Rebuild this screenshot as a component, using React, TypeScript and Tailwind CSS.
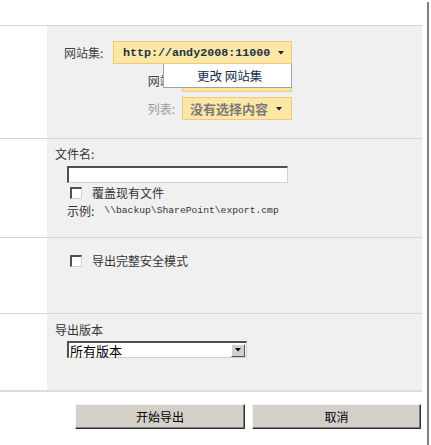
import React from "react";

const cjk = "font-['Noto_Sans_CJK_SC',_'Noto_Sans',_sans-serif]";

const Caret: React.FC<{ color?: string }> = ({ color = "#222" }) => (
  <svg width="6" height="4" viewBox="0 0 6 4" className="shrink-0">
    <path d="M0 0 H6 L3 3.5 Z" fill={color} />
  </svg>
);

const CheckBox: React.FC = () => (
  <span className="block w-[12px] h-[12px] bg-white border-t-2 border-l-2 border-t-[#505050] border-l-[#505050] border-r border-b border-r-[#d4d0c8] border-b-[#d4d0c8] shrink-0" />
);

const Row: React.FC<{ h: string; children?: React.ReactNode; className?: string }> = ({
  h,
  children,
  className,
}) => (
  <div className={`flex w-[422px] border-t border-[#d6d6d6] ${h}`}>
    <div className="w-[47px] bg-white" />
    <div className={`relative flex-1 bg-[#f0f0f0] ${className ?? ""}`}>{children}</div>
  </div>
);

export default function App() {
  return (
    <div className={`w-[431px] h-[445px] bg-white text-[12px] leading-[16px] text-[#333] ${cjk}`}>
      <div className="w-[429px] h-[443px] mt-[2px] border-r-2 border-[#808080] pt-[23px]">
        {/* site collection / site / list */}
        <Row h="h-[113px]" className="pl-[17px] pt-[15px]">
          <div className="flex items-center h-[23px]">
            <span className="w-[49px] text-[#444]">网站集:</span>
            <div className="flex items-center gap-[8px] w-[179px] h-[23px] pl-[9px] bg-[#fde7a7] border border-[#f0c878]">
              <span className="font-['Liberation_Mono',_monospace] font-bold text-[11.7px] text-[#1c3344]">
                http://andy2008:11000
              </span>
              <Caret />
            </div>
          </div>
          <div className="flex items-center h-[23px] mt-[5px] ml-[75px] gap-[7px]">
            <span className="w-[36px] text-right text-[#444]">网站:</span>
            <div className="w-[110px] h-[23px] bg-[#fde7a7] border border-[#f0c878]" />
          </div>
          <div className="flex items-center h-[23px] mt-[5px] ml-[75px] gap-[7px]">
            <span className="w-[36px] text-right text-[#9a9a9a]">列表:</span>
            <div className="flex items-center gap-[8px] w-[110px] h-[23px] pl-[7px] bg-[#fde7a7] border border-[#f0c878]">
              <span className="font-bold text-[13px] text-[#7a7a7a]">没有选择内容</span>
              <Caret />
            </div>
          </div>
          {/* dropdown menu */}
          <div className="absolute left-[116px] top-[38px] w-[129px] h-[24px] bg-white border border-[#9aa4b0] border-t-0 flex items-center pl-[33px]">
            <span className="text-[#15304f] text-[12.5px]">更改 网站集</span>
          </div>
        </Row>

        {/* file name */}
        <Row h="h-[99px]" className="pl-[8px] pt-[7px]">
          <div>文件名:</div>
          <div className="ml-[12px] mt-[4px] w-[221px] h-[17px] bg-white border-t-2 border-l-2 border-t-[#505050] border-l-[#505050] border-r border-b border-r-[#d4d0c8] border-b-[#d4d0c8]" />
          <div className="flex items-center ml-[15px] mt-[2px] gap-[10px]">
            <CheckBox />
            <span>覆盖现有文件</span>
          </div>
          <div className="flex items-center ml-[12px] mt-[2px]">
            <span>示例:</span>
            <span className="ml-[10px] font-['Liberation_Mono',_monospace] text-[9.7px]">
              \\backup\SharePoint\export.cmp
            </span>
          </div>
        </Row>

        {/* security */}
        <Row h="h-[76px]" className="pl-[23px] pt-[15px]">
          <div className="flex items-center gap-[10px]">
            <CheckBox />
            <span>导出完整安全模式</span>
          </div>
        </Row>

        {/* versions */}
        <Row h="h-[77px]" className="pl-[8px] pt-[8px]">
          <div>导出版本</div>
          <div className="ml-[12px] mt-[3px] flex items-center w-[180px] h-[17px] bg-white border-t-2 border-l-2 border-t-[#505050] border-l-[#505050] border-r border-b border-r-[#d4d0c8] border-b-[#d4d0c8]">
            <span className="flex-1 pl-[1px] text-[13px] leading-[13px] text-black">所有版本</span>
            <span className="flex items-center justify-center w-[14px] h-[13px] mr-[1px] bg-[#d4d0c8] border border-t-white border-l-white border-r-[#555] border-b-[#555]">
              <Caret color="#000" />
            </span>
          </div>
        </Row>
        <div className="w-[422px] h-[2px] bg-[#dcdcdc]" />

        {/* actions */}
        <div className="flex gap-[7px] pl-[75px] mt-[12px]">
          <button className="w-[170px] h-[25px] bg-[#d4d0c8] border border-t-[#f4f4f4] border-l-[#f4f4f4] border-r-[#303030] border-b-[#303030] shadow-[inset_-1px_-1px_0_#808080] text-black">
            开始导出
          </button>
          <button className="w-[169px] h-[25px] bg-[#d4d0c8] border border-t-[#f4f4f4] border-l-[#f4f4f4] border-r-[#303030] border-b-[#303030] shadow-[inset_-1px_-1px_0_#808080] text-black">
            取消
          </button>
        </div>
      </div>
    </div>
  );
}
